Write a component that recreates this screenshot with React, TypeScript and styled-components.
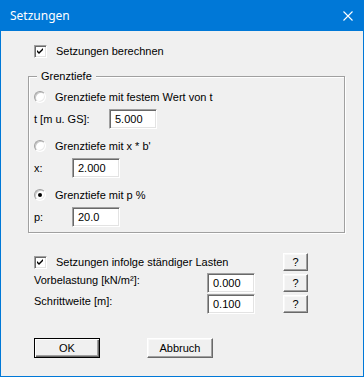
import React from "react";
import styled, { createGlobalStyle } from "styled-components";

const Global = createGlobalStyle`
  html, body { margin: 0; padding: 0; background: #f0f0f0; }
  body { font-family: "Liberation Sans", Arial, sans-serif; font-size: 11px; color: #000; }
  * { box-sizing: border-box; }
`;

const Window = styled.div`
  width: 364px;
  height: 377px;
  border: 1px solid #0078d7;
  border-top: none;
  background: #f0f0f0;
  display: flex;
  flex-direction: column;
`;

const TitleBar = styled.div`
  height: 31px;
  margin: 0 -1px;
  background: #0078d7;
  display: flex;
  align-items: center;
  justify-content: space-between;
  padding: 0 10px 0 10px;
  color: #fff;
  font-family: "Noto Sans", "Open Sans", sans-serif;
  font-size: 12px;
`;

const CloseIcon = styled.svg`
  width: 10px;
  height: 10px;
  margin-right: 1px;
`;

const Body = styled.div`
  display: flex;
  flex-direction: column;
  padding: 10px 18px 0 27px;
`;

const Row = styled.div<{ $h?: number; $mt?: number; $pl?: number; $pr?: number }>`
  display: flex;
  align-items: center;
  height: ${(p) => p.$h ?? 20}px;
  margin-top: ${(p) => p.$mt ?? 0}px;
  padding-left: ${(p) => p.$pl ?? 6}px;
  padding-right: ${(p) => p.$pr ?? 0}px;
`;

const CheckBox = styled.span`
  width: 13px;
  height: 13px;
  background: #fff;
  border: 1px solid;
  border-color: #a0a0a0 #fff #fff #a0a0a0;
  box-shadow: inset 1px 1px #696969, inset -1px -1px #e3e3e3;
  display: flex;
  align-items: center;
  justify-content: center;
  flex: none;
`;

const Radio = styled.span`
  width: 12px;
  height: 12px;
  border-radius: 50%;
  background: #fff;
  border: 1px solid;
  border-color: #a0a0a0 #fff #fff #a0a0a0;
  box-shadow: inset 1px 1px #c8c8c8, inset -1px -1px #ececec;
  display: flex;
  align-items: center;
  justify-content: center;
  flex: none;
`;

const Dot = styled.span`
  width: 4px;
  height: 4px;
  border-radius: 50%;
  background: #000;
`;

const OptionText = styled.span`
  margin-left: 9px;
  white-space: nowrap;
`;

const Label = styled.span<{ $w: number; $dy?: number }>`
  width: ${(p) => p.$w}px;
  flex: none;
  white-space: nowrap;
  position: relative;
  top: ${(p) => p.$dy ?? 0}px;
`;

const Input = styled.div<{ $w?: number }>`
  width: ${(p) => p.$w ?? 48}px;
  height: 20px;
  background: #fff;
  border: 1px solid;
  border-color: #a0a0a0 #fff #fff #a0a0a0;
  box-shadow: inset 1px 1px #696969, inset -1px -1px #e3e3e3;
  padding: 0 0 0 5px;
  display: flex;
  align-items: center;
  flex: none;
`;

const Spacer = styled.div`
  flex: 1;
`;

const Group = styled.div`
  position: relative;
  margin-top: 15px;
  height: 157px;
  border: 1px solid #a0a0a0;
  box-shadow: inset 1px 1px #fff, 1px 1px #fff;
  display: flex;
  flex-direction: column;
  padding: 10px 0 0 5px;
`;

const Legend = styled.span`
  position: absolute;
  top: -7px;
  left: 8px;
  padding: 0 4px 0 4px;
  background: #f0f0f0;
  line-height: 13px;
`;

const Button = styled.button<{ $w: number; $h?: number; $default?: boolean }>`
  width: ${(p) => p.$w}px;
  height: ${(p) => p.$h ?? 20}px;
  flex: none;
  background: #f0f0f0;
  font-family: "Liberation Sans", Arial, sans-serif;
  font-size: 11px;
  color: #000;
  padding: 0;
  border: 1px solid;
  border-color: ${(p) => (p.$default ? "#000" : "#fff #696969 #696969 #fff")};
  box-shadow: ${(p) =>
    p.$default
      ? "inset 1px 1px #fff, inset -1px -1px #696969, inset -2px -2px #a0a0a0"
      : "inset -1px -1px #a0a0a0, inset 1px 1px #f8f8f8"};
  display: flex;
  align-items: center;
  justify-content: center;
`;

const ButtonBar = styled.div`
  display: flex;
  margin-top: 24px;
  padding-left: 6px;
  gap: 47px;
`;

const Check = () => (
  <svg width="7" height="7" viewBox="0 0 7 7">
    <path d="M0 2 L2 4 L6 0 L6 2 L2 6 L0 4 Z" fill="#000" />
  </svg>
);

export default function App() {
  return (
    <>
      <Global />
      <Window>
        <TitleBar>
          <span>Setzungen</span>
          <CloseIcon viewBox="0 0 10 10">
            <path d="M0.5 0.5 L9.5 9.5 M9.5 0.5 L0.5 9.5" stroke="#fff" strokeWidth="1.1" />
          </CloseIcon>
        </TitleBar>
        <Body>
          <Row>
            <CheckBox>
              <Check />
            </CheckBox>
            <OptionText>Setzungen berechnen</OptionText>
          </Row>
          <Group>
            <Legend>Grenztiefe</Legend>
            <Row $pl={0}>
              <Radio />
              <OptionText>Grenztiefe mit festem Wert von t</OptionText>
            </Row>
            <Row $pl={0} $mt={2}>
              <Label $w={75}>t [m u. GS]:</Label>
              <Input>5.000</Input>
            </Row>
            <Row $pl={0} $mt={7}>
              <Radio />
              <OptionText>Grenztiefe mit x * b'</OptionText>
            </Row>
            <Row $pl={0} $mt={2}>
              <Label $w={38}>x:</Label>
              <Input>2.000</Input>
            </Row>
            <Row $pl={0} $mt={7}>
              <Radio>
                <Dot />
              </Radio>
              <OptionText>Grenztiefe mit p %</OptionText>
            </Row>
            <Row $pl={0} $mt={2}>
              <Label $w={38}>p:</Label>
              <Input>20.0</Input>
            </Row>
          </Group>
          <Row $mt={19} $pr={37}>
            <CheckBox>
              <Check />
            </CheckBox>
            <OptionText>Setzungen infolge ständiger Lasten</OptionText>
            <Spacer />
            <Button $w={25} $h={18}>?</Button>
          </Row>
          <Row $mt={1} $pr={37}>
            <Label $w={173} $dy={-3}>Vorbelastung [kN/m²]:</Label>
            <Input>0.000</Input>
            <Spacer />
            <Button $w={25} $h={18}>?</Button>
          </Row>
          <Row $mt={1} $pr={37}>
            <Label $w={173} $dy={-3}>Schrittweite [m]:</Label>
            <Input>0.100</Input>
            <Spacer />
            <Button $w={25} $h={18}>?</Button>
          </Row>
          <ButtonBar>
            <Button $w={66} $default>OK</Button>
            <Button $w={66}>Abbruch</Button>
          </ButtonBar>
        </Body>
      </Window>
    </>
  );
}
